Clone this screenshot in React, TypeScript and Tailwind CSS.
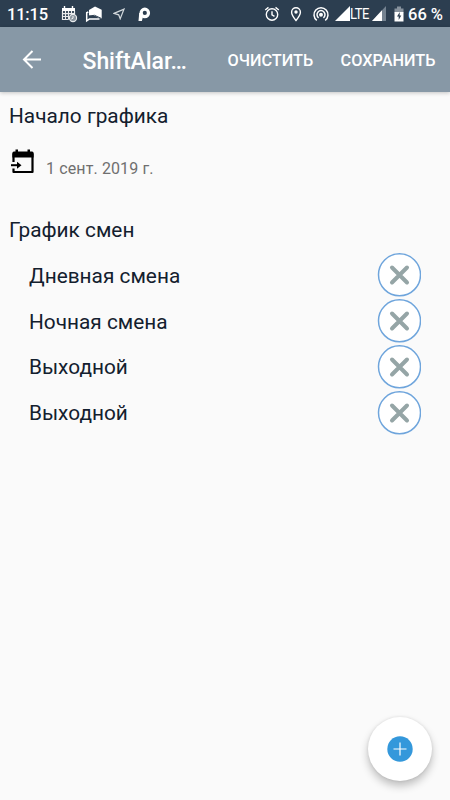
import React from "react";

const shifts = ["Дневная смена", "Ночная смена", "Выходной", "Выходной"];

function StatusBar() {
  return (
    <div className="flex h-[27px] w-full items-center bg-[#2c3e50] text-white">
      <span className="mt-[2px] ml-[7px] w-[54px] text-[16.5px] leading-[27px] font-medium tracking-[-0.2px] whitespace-nowrap">11:15</span>
      <svg className="h-[18px] w-[17px] shrink-0" viewBox="0 0 17 18" fill="none">
        <path d="M1 3h13v3H1z" fill="#fff" />
        <path d="M3.5 1v3M11.5 1v3" stroke="#fff" strokeWidth="1.4" />
        <path d="M1.5 6v8.5h6M1.5 8.7h12M1.5 11.5h7M4.5 6v8.5M7.5 6v8.5M10.5 6v4M13.5 6v3" stroke="#fff" strokeWidth="1.2" opacity=".9" />
        <circle cx="12" cy="13" r="3.6" fill="#8a959f" stroke="#e8ebed" strokeWidth="1.1" />
        <path d="M12 11v2.2l-1.7.8" stroke="#fff" strokeWidth=".9" />
      </svg>
      <svg className="ml-[7px] h-[18px] w-[18px] shrink-0" viewBox="0 0 18 18" fill="none">
        <path d="M4 5 10 1.5 16.7 4.8v9L13 12.5 10.500 11 4 10.800z" fill="#fff" />
        <path d="M3.300 7 1.700 7.800v8l2.800-1.900h10" stroke="#fff" strokeWidth="1.500" />
        <path d="M4 11 9.500 10.300l7 3.200" stroke="#2c3e50" strokeWidth="1" />
      </svg>
      <svg className="ml-[10px] h-[12px] w-[13px] shrink-0" viewBox="0 0 13 12" fill="none">
        <path d="M1 5.4 11 1.2 7.2 10.8 5.7 6.8z" stroke="#d2d8dc" strokeWidth="1.200" />
      </svg>
      <svg className="ml-[11px] h-[16px] w-[15px] shrink-0" viewBox="0 0 15 16" fill="none">
        <circle cx="7.800" cy="6.900" r="3.700" stroke="#fff" strokeWidth="3.200" />
        <path d="M2.200 7h3.300v5.500l-.6 2.500H1.500z" fill="#fff" />
      </svg>
      <svg className="ml-[112px] h-[16px] w-[16px] shrink-0" viewBox="0 0 16 16" fill="none" stroke="#fff" strokeWidth="1.4">
        <circle cx="8" cy="8.5" r="5.7" />
        <path d="M1.2 4 4.5 1.4M14.8 4l-3.300-2.6M8 5.3v3.5l2.5 1.5" />
      </svg>
      <svg className="ml-[10px] h-[16px] w-[12px] shrink-0" viewBox="0 0 12 16" fill="none">
        <path d="M6 14.5C3.2 11 1.6 8.6 1.6 6.2a4.4 4.4 0 0 1 8.8 0c0 2.4-1.6 4.8-4.4 8.3z" stroke="#fff" strokeWidth="1.4" />
        <circle cx="6" cy="6" r="1.7" fill="#fff" />
      </svg>
      <svg className="ml-[10px] h-[16px] w-[18px] shrink-0" viewBox="0 0 18 16" fill="none" stroke="#fff" strokeWidth="1.500">
        <path d="M4.800 14.300a7 7 0 1 1 8.400 0" />
        <path d="M6.600 11.800a4 4 0 1 1 4.800 0" />
        <circle cx="9" cy="8.700" r="1.200" fill="#fff" />
      </svg>
      <svg className="ml-[5px] h-[15px] w-[15px] shrink-0" viewBox="0 0 15 15"><path d="M0 15 15 0v15z" fill="#fff" /></svg>
      <span className="mt-[2px] w-[22px] origin-left scale-y-110 text-[13px] leading-[27px] tracking-[-0.500px] whitespace-nowrap">LTE</span>
      <svg className="h-[15px] w-[14px] shrink-0" viewBox="0 0 14 15">
        <path d="M0 15 14 0v15z" fill="#748290" /><path d="M0 15 10 4.300V15z" fill="#fff" />
      </svg>
      <svg className="ml-[8px] h-[16px] w-[10px] shrink-0" viewBox="0 0 10 16">
        <path d="M3 .500h4v2h2.500v4h-9v-4H3z" fill="#87929d" />
        <path d="M.5 6h9v9.5h-9z" fill="#fff" />
        <path d="M5.800 6 3 10.500h1.700V14L7.300 9.500H5.600z" fill="#2c3e50" />
      </svg>
      <span className="mt-[2px] ml-[4px] text-[16.5px] leading-[27px] font-medium whitespace-nowrap">66 %</span>
    </div>
  );
}

function DeleteButton() {
  return (
    <button aria-label="Удалить" className="flex h-[44px] w-[44px] shrink-0 items-center justify-center">
      <svg className="h-[44px] w-[44px]" viewBox="0 0 44 44">
        <circle cx="22.500" cy="21.800" r="21" fill="#fff" stroke="#6fa5dc" strokeWidth="1.500" />
        <path d="m15 14.500 15 15m0-15-15 15" stroke="#95a5a6" strokeWidth="4" strokeLinecap="round" />
      </svg>
    </button>
  );
}

export default function App() {
  return (
    <div className="relative flex h-[800px] w-[450px] flex-col overflow-hidden bg-[#fafafa] font-[Roboto,sans-serif] text-[#13202e]">
      <StatusBar />
      <header className="flex h-[64.5px] shrink-0 items-center bg-[#8798a6] text-white shadow-[0_1px_4px_rgba(0,0,0,0.22)]">
        <svg className="ml-[22px] h-[20px] w-[20px] shrink-0" viewBox="0 0 20 20" fill="none" stroke="#fff" strokeWidth="2">
          <path d="M19 10.500H2.500M10.500 2 2 10.500l8.500 8.500" />
        </svg>
        <h1 className="mt-[5px] ml-[40.500px] w-[145px] text-[23px] font-medium tracking-[-0.050px] whitespace-nowrap">ShiftAlar…</h1>
        <span className="mt-[3px] w-[113px] text-[16.300px] font-medium whitespace-nowrap">ОЧИСТИТЬ</span>
        <span className="mt-[3px] text-[16.300px] font-medium whitespace-nowrap">СОХРАНИТЬ</span>
      </header>
      <main className="flex flex-col">
        <h2 className="mt-[9px] ml-[9px] text-[20.800px] leading-[30px] tracking-[0.010px]">Начало графика</h2>
        <div className="mt-[16px] flex h-[38px] items-start">
          <svg className="ml-[11px] mt-[2px] h-[25px] w-[24px] shrink-0" viewBox="0 0 24 25" fill="none">
            <path d="M2.500 13V5h19v18h-19v-3.500" stroke="#000" strokeWidth="2.200" strokeLinejoin="round" />
            <path d="M1.400 4q0-1.500 1.500-1.500h18.200q1.500 0 1.500 1.500V8.500H1.400zM4.500 .500H7v4H4.500zM16.500 .500H19v4h-2.500z" fill="#000" />
            <path d="M0 16.200h8" stroke="#000" strokeWidth="2" />
            <path d="m6 12.700 4.500 3.500L6 19.700z" fill="#000" />
          </svg>
          <span className="ml-[11px] mt-[10px] text-[16px] leading-[24px] tracking-[0.120px] text-[#6f6f6f]">1 сент. 2019 г.</span>
        </div>
        <h2 className="mt-[30px] ml-[9px] text-[20.800px] leading-[30px] tracking-[0.010px]">График смен</h2>
        <ul className="mt-[8px] flex flex-col pr-[29px] pl-[29px]">
          {shifts.map((name, i) => (
            <li key={i} className="flex h-[45.800px] items-center justify-between text-[20.800px] tracking-[0.010px]">
              <span className="pt-[2px]">{name}</span>
              <DeleteButton />
            </li>
          ))}
        </ul>
      </main>
      <button aria-label="Добавить" className="absolute right-[18.500px] bottom-[19px] flex h-[64px] w-[64px] items-center justify-center rounded-full bg-white shadow-[0_5px_9px_rgba(0,0,0,0.24),0_0_3px_rgba(0,0,0,0.10)]">
        <svg className="h-[26px] w-[26px]" viewBox="0 0 26 26">
          <circle cx="13" cy="13" r="12.700" fill="#3498db" />
          <path d="M6.500 13h13M13 6.500v13" stroke="#fff" strokeWidth="1.200" />
        </svg>
      </button>
    </div>
  );
}
